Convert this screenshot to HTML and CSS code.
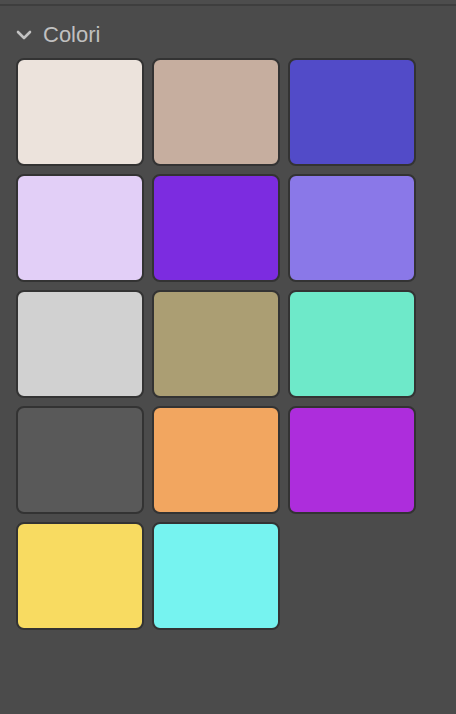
FILE: index.html
```html
<!DOCTYPE html>
<html>
<head>
<meta charset="utf-8">
<link rel="stylesheet" href="styles.css">
</head>
<body>
<div class="topbar"></div>
<section class="panel">
  <div class="header">
    <svg class="chev" width="16" height="12" viewBox="0 0 16 12"><path d="M2 3 L8 9 L14 3" fill="none" stroke="#c2c2c2" stroke-width="2.6" stroke-linecap="round" stroke-linejoin="round"/></svg>
    <span class="title">Colori</span>
  </div>
  <div class="grid">
    <div class="sw" style="background:#ece3dc"></div>
    <div class="sw" style="background:#c6ae9f"></div>
    <div class="sw" style="background:#524bc8"></div>
    <div class="sw" style="background:#e2cff7"></div>
    <div class="sw" style="background:#7c2ce0"></div>
    <div class="sw" style="background:#8a78e8"></div>
    <div class="sw" style="background:#d1d1d1"></div>
    <div class="sw" style="background:#ab9e73"></div>
    <div class="sw" style="background:#6ee9c9"></div>
    <div class="sw" style="background:#595959"></div>
    <div class="sw" style="background:#f2a660"></div>
    <div class="sw" style="background:#ad2ddc"></div>
    <div class="sw" style="background:#f8db61"></div>
    <div class="sw" style="background:#76f3f0"></div>
  </div>
</section>
</body>
</html>
```
FILE: styles.css
```css
html, body {
  margin: 0;
  padding: 0;
  background: #4b4b4b;
  height: 100%;
}
body {
  font-family: "Liberation Sans", Arial, sans-serif;
}
.topbar {
  height: 4px;
  background: #4d4d4d;
  border-bottom: 2px solid #3e3e3e;
}
.panel {
  padding: 0 16px;
}
.header {
  display: flex;
  align-items: center;
  height: 52px;
  gap: 11px;
  padding-top: 5px;
  box-sizing: border-box;
}
.chev {
  display: block;
}
.title {
  color: #c0c0c0;
  font-size: 22px;
  line-height: 1;
}
.grid {
  display: grid;
  grid-template-columns: repeat(3, 128px);
  grid-auto-rows: 108px;
  gap: 8px;
}
.sw {
  box-sizing: border-box;
  border: 2px solid #333333;
  border-radius: 8px;
}
```
